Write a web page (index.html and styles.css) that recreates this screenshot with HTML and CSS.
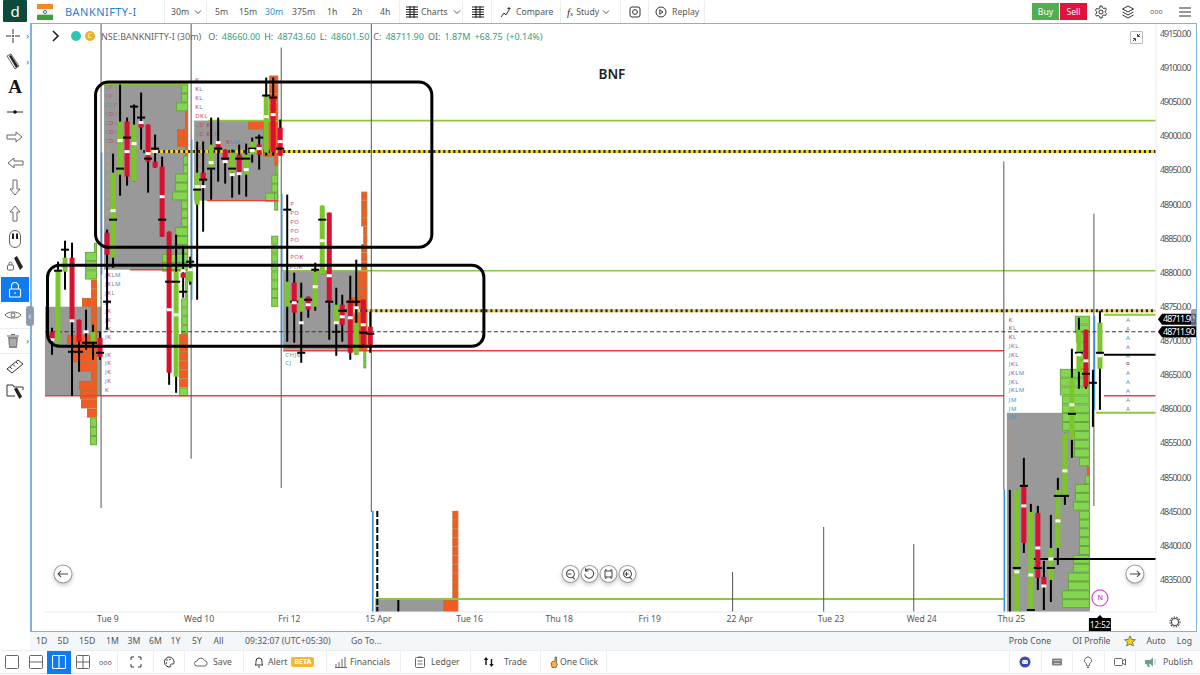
FILE: index.html
```html
<!DOCTYPE html>
<html lang="en">
<head>
<meta charset="utf-8">
<title>BANKNIFTY-I</title>
<link rel="stylesheet" href="styles.css">
</head>
<body>
<div class="app">
  <header class="topbar">
    <div class="logo">d</div>
    <svg class="flag" viewBox="0 0 16 16"><rect width="16" height="5.3" fill="#f08a24"/><rect y="5.3" width="16" height="5.4" fill="#f4f4f4"/><rect y="10.7" width="16" height="5.3" fill="#3f9e3f"/><circle cx="8" cy="8" r="1.6" fill="none" stroke="#2a4a9a" stroke-width=".8"/></svg>
    <div class="symbol">BANKNIFTY-I</div>
    <div class="cell c-int">30m<svg class="chev" viewBox="0 0 8 8"><path d="M1 2.5 4 5.5 7 2.5"/></svg></div>
    <div class="cell c-times">
      <span>5m</span><span>15m</span><span class="on">30m</span><span>375m</span><span>1h</span><span>2h</span><span>4h</span>
    </div>
    <div class="cell c-charts">
      <svg class="ic-14" viewBox="0 0 14 14"><path class="bars" d="M1 2h12M1 4.5h12M1 7h12M1 9.5h12M1 12h12M5 1v12M9 1v12"/></svg>Charts<svg class="chev" viewBox="0 0 8 8"><path d="M1 2.5 4 5.5 7 2.5"/></svg>
    </div>
    <div class="cell c-tpl"><svg class="ic-14" viewBox="0 0 14 14"><path class="bars" d="M1 2h12M1 4.5h12M1 7h12M1 9.5h12M1 12h12M5 1v12M9 1v12"/></svg></div>
    <div class="cell c-cmp"><svg class="ic-12" viewBox="0 0 12 12"><path class="ln" d="M1 11 4 7l2 2 3-5"/><path class="ln" d="M9 1v3M7.5 2.5h3"/></svg>Compare</div>
    <div class="cell c-study"><i class="fx">f<small>x</small></i>Study<svg class="chev" viewBox="0 0 8 8"><path d="M1 2.5 4 5.5 7 2.5"/></svg></div>
    <div class="cell c-cam"><svg class="ic-12" viewBox="0 0 12 12"><rect class="ln" x="1" y="1" width="10" height="10" rx="2"/><circle class="ln" cx="6" cy="6" r="2.4"/></svg></div>
    <div class="cell c-replay"><svg class="ic-12" viewBox="0 0 12 12"><circle class="ln" cx="6" cy="6" r="5"/><path class="ln" d="M4.8 3.8 8 6 4.8 8.200z"/></svg>Replay</div>
    <div class="spacer"></div>
    <button class="trade buy">Buy</button>
    <button class="trade sell">Sell</button>
    <svg class="ic-14 t-gear" viewBox="0 0 14 14"><circle class="ln" cx="7" cy="7" r="2"/><path class="ln" d="M6 1h2l.4 1.700 1.500.8 1.600-.6 1 1.800-1.200 1.200v1.600l1.200 1.200-1 1.800-1.600-.6-1.500.8L8 13H6l-.4-1.700-1.500-.8-1.600.6-1-1.800 1.200-1.200V6.500L1.500 5.300l1-1.800 1.600.6 1.500-.8z"/></svg>
    <svg class="ic-14 t-layers" viewBox="0 0 14 14"><path class="ln" d="M7 1 12.500 4 7 7 1.500 4zM1.500 7 7 10l5.500-3M1.500 10 7 13l5.500-3"/></svg>
    <span class="t-dots">ooo</span>
    <svg class="ic-14 t-menu" viewBox="0 0 14 14"><path class="ln" d="M1 3h12M1 7h12M1 11h12"/></svg>
  </header>

  <div class="middle">
    <nav class="tools">
      <div class="tool has-more"><svg viewBox="0 0 18 18"><path class="ln" d="M9 2v5M9 11v5M2 9h5M11 9h5"/><circle cx="9" cy="9" r="1" fill="#222"/></svg><b class="more">›</b></div>
      <div class="tool has-more"><svg viewBox="0 0 18 18"><path class="gr" d="M3 4 7 2l8 12-4 3z"/><path d="M5 4 7 3l7 11-2 2z" fill="#222"/></svg><b class="more">›</b></div>
      <div class="tool"><span class="glyph-a">A</span></div>
      <div class="tool"><svg viewBox="0 0 18 18"><path class="ln" d="M1 9h16"/><circle cx="9" cy="9" r="1.800" fill="#111"/></svg></div>
      <div class="tool"><svg viewBox="0 0 18 18"><path class="gr" d="M1 7h9V4l6 5-6 5v-3H1z"/></svg></div>
      <div class="tool"><svg viewBox="0 0 18 18"><path class="gr" d="M17 7H8V4L2 9l6 5v-3h9z"/></svg></div>
      <div class="tool"><svg viewBox="0 0 18 18"><path class="gr" d="M7 1v9H4l5 6 5-6h-3V1z"/></svg></div>
      <div class="tool"><svg viewBox="0 0 18 18"><path class="gr" d="M7 17V8H4l5-6 5 6h-3v9z"/></svg></div>
      <div class="tool"><svg viewBox="0 0 18 18"><path class="gr" d="M3.500 6a5.500 5.500 0 0 1 11 0v6a5.500 5.500 0 0 1-11 0z"/><path d="M6 3.500h2V9H6zM10 3.500h2V9h-2z" fill="#222"/></svg></div>
      <div class="tool"><svg viewBox="0 0 18 18"><path d="M8 3 11 1l6 11-3 3z" fill="#222"/><rect class="gr" x="1.500" y="10" width="6" height="5" rx="1"/><path class="gr" d="M3 10V8.500a1.500 1.500 0 0 1 3 0V10"/></svg></div>
      <div class="tool active"><svg viewBox="0 0 18 18"><rect class="wh" x="3.500" y="8" width="11" height="8" rx="1"/><path class="wh" d="M5.500 8V5a3.500 3.500 0 0 1 7 0v3M9 11v2"/></svg></div>
      <div class="tool has-more"><svg viewBox="0 0 18 18"><path class="gr" d="M1 9c3-4 13-4 16 0-3 4-13 4-16 0z"/><circle class="gr" cx="9" cy="9" r="2"/></svg><b class="more">›</b></div>
      <div class="tool rule has-more"><svg viewBox="0 0 18 18"><path d="M4 5h10l-1 11H5z" fill="#888"/><path class="gr" d="M3 4h12M7 2.500h4"/><path d="M7 7v7M9 7v7M11 7v7" stroke="#eee" stroke-width=".7"/></svg><b class="more">›</b></div>
      <div class="tool rule"><svg viewBox="0 0 18 18"><path class="ln" d="M1 12 12 3l5 4-11 9zM4 10l2 2M7 7.500l2 2M10 5l2 2"/></svg></div>
      <div class="tool"><svg viewBox="0 0 18 18"><path class="ln" d="M1 3h6l1 2h9v3M1 3v11h8"/><path d="M8 7l3-1.500 5 9-2.500 2.500z" fill="#222"/></svg></div>
    </nav>
    <div class="handle">‹</div>
    <main class="frame">
      <div id="chart" class="chart"></div>
      <div class="legend">
        <svg class="leg-open" viewBox="0 0 8 12"><path d="M1 1l5 5-5 5"/></svg>
        <i class="dot teal"></i><i class="dot gold">C</i>
        <span class="leg-name">NSE:BANKNIFTY-I (30m)</span>
        <span class="k">O:</span><span class="v">48660.00</span>
        <span class="k">H:</span><span class="v">48743.60</span>
        <span class="k">L:</span><span class="v">48601.50</span>
        <span class="k">C:</span><span class="v">48711.90</span>
        <span class="k">OI:</span><span class="v">1.87M</span><span class="v">+68.75</span><span class="v">(+0.14%)</span>
      </div>
      <div class="collapse"><svg viewBox="0 0 11 11"><path d="M6.500 4.500 9 2M6.500 2v2.500H9M4.500 6.500 2 9M2 6.500h2.500V9"/></svg></div>
      <div class="handle-r">›</div>
    </main>
  </div>

  <div class="ranges">
    <div class="rlist"><span>1D</span><span>5D</span><span>15D</span><span>1M</span><span>3M</span><span>6M</span><span>1Y</span><span>5Y</span><span>All</span></div>
    <span class="clock">09:32:07 (UTC+05:30)</span>
    <span class="goto">Go To...</span>
    <div class="spacer"></div>
    <span class="r-prob">Prob Cone</span>
    <span class="r-oi">OI Profile</span>
    <svg class="r-star" viewBox="0 0 12 12"><path d="M6 .8 7.600 4.300l3.800.4-2.900 2.500.9 3.800L6 9l-3.400 2 .9-3.800L.6 4.700l3.800-.4z"/></svg>
    <span class="r-auto">Auto</span>
    <span class="r-log">Log</span>
  </div>

  <footer class="bottombar">
    <div class="b-layouts">
      <svg class="lay" viewBox="0 0 16 16"><rect class="gr" x="1.500" y="1.500" width="13" height="13" rx="1"/></svg>
      <svg class="lay l2" viewBox="0 0 16 16"><rect class="gr" x="1.500" y="1.500" width="13" height="13" rx="1"/><path class="gr" d="M1.500 8h13"/></svg>
      <span class="lay-on"><svg viewBox="0 0 16 16"><rect class="wh" x="1.500" y="1.500" width="13" height="13" rx="1"/><path class="wh" d="M8 1.500v13"/></svg></span>
      <svg class="lay" viewBox="0 0 16 16"><rect class="gr" x="1.500" y="1.500" width="13" height="13" rx="1"/><path class="gr" d="M1.500 8h13M8 1.500v13"/></svg>
      <span class="b-dots">ooo</span>
    </div>
    <div class="b-cell b-full"><svg class="ic-12" viewBox="0 0 12 12"><path class="ln" d="M1 4V1h3M8 1h3v3M11 8v3H8M4 11H1V8"/></svg></div>
    <div class="b-cell b-pal"><svg class="ic-12" viewBox="0 0 12 12"><path class="ln" d="M6 1a5 5 0 1 0 1 10c1 0 .8-1.200.5-1.800-.3-.8.400-1.200 1.200-1.200H10c1 0 1-1 1-2a5 5 0 0 0-5-5z"/><circle cx="4" cy="4" r=".8" fill="#333"/><circle cx="7" cy="3.500" r=".8" fill="#333"/><circle cx="3.500" cy="7" r=".8" fill="#333"/></svg></div>
    <div class="b-cell b-save"><svg class="ic-12w" viewBox="0 0 14 10"><path class="gr" d="M3 9a2.500 2.500 0 0 1 0-5 4 4 0 0 1 7.500-.5A2.800 2.800 0 0 1 11 9z"/></svg>Save</div>
    <div class="b-cell b-alert"><svg class="ic-12" viewBox="0 0 12 12"><path class="ln" d="M2 9c1-1 1-2 1-4a3 3 0 0 1 6 0c0 2 0 3 1 4zM5 11h2"/></svg>Alert<em class="beta">BETA</em></div>
    <div class="b-cell b-fin"><svg class="ic-12" viewBox="0 0 12 12"><path class="gr" d="M1 11V8M4 11V6M7 11V3M10 11V1M0 11.500h12"/></svg>Financials</div>
    <div class="b-cell b-led"><svg class="ic-12" viewBox="0 0 12 12"><rect class="gr" x="1.500" y="1.500" width="9" height="10" rx="1"/><path class="gr" d="M4 1h4M3.500 5h5M3.500 8h5"/></svg>Ledger</div>
    <div class="b-cell b-trade"><svg class="ic-12" viewBox="0 0 12 12"><path d="M3 1 .8 4h1.500v5h1.400V4h1.500zM8.500 11 6.300 8h1.500V3h1.400v5h1.500z" fill="#111"/></svg>Trade</div>
    <div class="b-cell b-one"><svg class="ic-hand" viewBox="0 0 8 12"><path d="M5 1h1.500v6L7.500 8 6 11.500H2L1 7l1.500-1.500L5 5z" fill="#f2b33d" stroke="#333" stroke-width=".6"/></svg>One Click</div>
    <div class="spacer"></div>
    <div class="b-cell b-ic first"><svg class="ic-12" viewBox="0 0 12 12"><circle cx="6" cy="6" r="5.500" fill="#3c4aa8"/><rect x="3" y="4" width="6" height="4" rx="1.500" fill="#fff"/><circle cx="4.800" cy="6" r=".6" fill="#3c4aa8"/><circle cx="7.200" cy="6" r=".6" fill="#3c4aa8"/></svg></div>
    <div class="b-cell b-ic"><svg class="ic-12" viewBox="0 0 12 12"><rect x="1" y="2.500" width="10" height="7" rx="1" fill="#7b8288"/><path d="M2.500 4.500h7M3 7.500h6" stroke="#ddd" stroke-width=".7"/></svg></div>
    <div class="b-cell b-ic"><svg class="ic-12" viewBox="0 0 12 12"><path class="gr" d="M6 1a3.500 3.500 0 0 0-2 6.400L5 10h2l1-2.600A3.500 3.500 0 0 0 6 1zM5 11.500h2"/></svg></div>
    <div class="b-cell b-ic"><svg class="ic-12" viewBox="0 0 12 12"><rect class="gr" x=".5" y="2.500" width="8" height="7" rx="1"/><path class="gr" d="M8.500 5 11.500 3v6L8.500 7z"/></svg></div>
    <div class="b-cell b-pub"><svg class="ic-12" viewBox="0 0 12 12"><path d="M0 4h5l3-2.500v9L5 8H4l1 3H3L1.500 8H0z" fill="#6f9f8f"/><path d="M10 3v6" stroke="#bbb"/></svg>Publish</div>
  </footer>
</div>
<script src="chart.js"></script>
</body>
</html>
```
FILE: styles.css
```css
* { box-sizing: border-box; }
html, body { margin: 0; height: 100%; background: #fff; overflow: hidden; }
body { font-family: "Noto Sans", "Open Sans", sans-serif; font-size: 8.7px; color: #555; white-space: nowrap; }
svg { display: block; flex: none; }
.ln { fill: none; stroke: #333; stroke-width: 1; }
.gr { fill: none; stroke: #666; stroke-width: 1; }
.wh { fill: none; stroke: #fff; stroke-width: 1.1; }
.bars { fill: none; stroke: #222; stroke-width: 1.1; }
.ic-14 { width: 14px; height: 14px; }
.ic-12 { width: 12px; height: 12px; }
.ic-12w { width: 14px; height: 10px; }
.app { width: 1200px; height: 675px; display: flex; flex-direction: column; }
.spacer { flex: 1; }

/* top bar */
.topbar { height: 23px; display: flex; align-items: center; background: #fff; flex: none; }
.logo { width: 24px; height: 22px; margin-left: 3px; background: #0c4a3c; color: #fff; font-size: 15px; line-height: 22px; text-align: center; align-self: flex-start; border-radius: 1px; }
.flag { width: 16px; height: 16px; margin-left: 10px; }
.symbol { width: 99px; margin-left: 12px; color: #1f7fd0; font-size: 11px; letter-spacing: .45px; }
.cell { height: 22px; display: flex; align-items: center; border-left: 1px solid #eceff2; flex: none; }
.c-int { width: 42px; padding-left: 6px; gap: 5px; }
.chev { width: 8px; height: 8px; }
.chev path { fill: none; stroke: #555; stroke-width: 1; }
.c-times { width: 193px; padding-left: 8px; }
.c-times span { flex: none; }
.c-times span:nth-child(1) { width: 24px; }
.c-times span:nth-child(2) { width: 26px; }
.c-times span:nth-child(3) { width: 27px; }
.c-times span:nth-child(4) { width: 35px; }
.c-times span:nth-child(5) { width: 25px; }
.c-times span:nth-child(6) { width: 28px; }
.c-times .on { color: #2f8fe0; }
.c-charts { width: 63px; padding-left: 5px; gap: 2px; }
.c-charts .chev { margin-left: 3px; }
.c-tpl { width: 29px; padding-left: 8px; }
.c-cmp { width: 69px; padding-left: 8px; gap: 4px; }
.c-study { width: 60px; padding-left: 6px; gap: 3px; }
.fx { font-family: "Liberation Serif", serif; font-size: 11px; color: #333; }
.fx small { font-size: 7px; }
.c-cam { width: 28px; padding-left: 8px; }
.c-replay { width: 57px; padding-left: 6px; gap: 5px; border-right: 1px solid #eceff2; }
.trade { width: 27px; height: 17px; border: 0; padding: 0; font: inherit; color: #fff; }
.buy { background: #4fae50; }
.sell { margin-left: 1px; margin-right: 7px; background: #e2123f; }
.t-gear { margin-right: 13px; }
.t-layers { margin-right: 15px; }
.t-dots { width: 14px; font-size: 7px; color: #666; margin-right: 14px; }
.t-menu { margin-right: 8px; }

/* middle */
.middle { flex: 1; display: flex; min-height: 0; position: relative; }
.tools { width: 30px; flex: none; display: flex; flex-direction: column; }
.tool { height: 25.4px; flex: none; display: flex; align-items: center; justify-content: center; position: relative; color: #444; }
.tool svg { width: 18px; height: 18px; }
.has-more svg { margin-right: 4px; }
.tool.active { background: #0d7bf2; margin: 0 1px; }
.tool.rule { border-top: 1px solid #eee; }
.more { position: absolute; right: 1px; font-weight: 400; font-size: 9px; color: #555; }
.glyph-a { font-family: "Liberation Serif", serif; font-size: 19px; font-weight: 700; color: #111; line-height: 1; }
.handle { position: absolute; left: 26px; top: 283px; width: 8px; height: 20px; background: #8c9cb0; color: #fff; border-radius: 3px; font-size: 9px; line-height: 19px; text-align: center; z-index: 2; }
.frame { flex: 1; margin-right: 3px; border: 1.5px solid #7fb2df; border-left-width: 2px; position: relative; min-width: 0; }
.chart { width: 100%; height: 100%; }
.chart svg { width: 100%; height: 100%; }
.legend { position: absolute; left: 0; top: 4px; height: 16px; display: flex; align-items: center; font-size: 9px; pointer-events: none; }
.leg-open { width: 8px; height: 12px; margin-left: 20px; }
.leg-open path { fill: none; stroke: #222; stroke-width: 1.6; }
.dot { width: 10px; height: 10px; border-radius: 50%; flex: none; font-style: normal; font-size: 7px; line-height: 10px; text-align: center; color: #fff; }
.teal { margin-left: 11px; background: #2cc7b4; }
.gold { margin-left: 4px; background: #eeb023; }
.leg-name { margin-left: 6px; margin-right: 7px; color: #666; }
.k { margin-right: 4px; color: #666; }
.v { margin-right: 4px; color: #2f9f84; }
.collapse { position: absolute; right: 53px; top: 7px; width: 13px; height: 13px; border: 1px solid #bbb; border-radius: 1px; background: #fff; }
.collapse svg { width: 11px; height: 11px; }
.collapse path { fill: none; stroke: #333; stroke-width: .9; }
.handle-r { position: absolute; right: 0; top: 285px; width: 5px; height: 17px; background: rgba(120, 135, 155, .75); color: #fff; border-radius: 2px 0 0 2px; font-size: 7px; line-height: 16px; text-align: center; }

/* chart */
.p-t { font-size: 9px; letter-spacing: -1px; fill: #555; }
.t-t { font-size: 8.6px; fill: #555; }
.tpo { font-size: 6px; letter-spacing: .5px; }
.bnf { font-size: 13.5px; font-weight: 600; fill: #222; }
.tag-t { font-size: 9px; letter-spacing: -.9px; fill: #fff; }
.clk-t { font-size: 8px; fill: #fff; }
.n-t { font-size: 7px; fill: #e040e0; font-weight: 600; }
.nav-btn { fill: #fff; stroke: #999; stroke-width: 1; filter: drop-shadow(0 2px 2px rgba(0,0,0,.2)); }

/* range bar */
.ranges { height: 18px; flex: none; margin-left: 30px; display: flex; align-items: center; background: #f4f7fa; }
.rlist { display: flex; margin-left: 6px; width: 215px; flex: none; }
.rlist span { width: 21.500px; flex: none; }
.rlist span:nth-child(3) { width: 27px; }
.clock { margin-left: -6px; width: 106px; flex: none; }
.r-prob { margin-right: 21px; }
.r-oi { margin-right: 13px; }
.r-star { width: 12px; height: 12px; margin-right: 11px; }
.r-star path { fill: #f2d020; stroke: #555; stroke-width: .7; }
.r-auto { margin-right: 11px; }
.r-log { margin-right: 8px; }

/* bottom bar */
.bottombar { height: 24px; flex: none; margin-bottom: 1px; display: flex; align-items: center; background: #fff; border-top: 1px solid #eceff2; border-bottom: 1px solid #e4e6e8; color: #555; }
.b-layouts { width: 117px; flex: none; display: flex; align-items: center; padding-left: 4px; }
.lay { width: 16px; height: 16px; margin-right: 4px; }
.l2 { margin-left: 4px; margin-right: 3px; }
.lay-on { width: 24px; height: 23px; background: #0d7bf2; display: flex; align-items: center; justify-content: center; margin-right: 4px; }
.lay-on svg { width: 16px; height: 16px; }
.b-dots { font-size: 7px; margin-left: 4px; color: #555; }
.b-cell { height: 23px; flex: none; display: flex; align-items: center; border-left: 1px solid #eceff2; }
.b-full { width: 36px; justify-content: center; }
.b-pal { width: 31px; justify-content: center; }
.b-save { width: 59px; padding-left: 9px; gap: 5px; }
.b-alert { width: 83px; padding-left: 9px; gap: 3px; }
.beta { width: 23px; height: 10px; margin-left: 1px; background: #f5b638; border-radius: 2px; color: #fff; font-style: normal; font-size: 7px; font-weight: 700; line-height: 10px; text-align: center; }
.b-fin { width: 74px; padding-left: 8px; gap: 3px; }
.b-led { width: 70px; padding-left: 13px; gap: 5px; }
.b-trade { width: 70px; padding-left: 12px; gap: 9px; }
.b-one { width: 67px; padding-left: 9px; gap: 2px; border-right: 1px solid #eceff2; }
.ic-hand { width: 8px; height: 12px; }
.b-ic { width: 31.500px; justify-content: center; }
.b-pub { width: 65px; padding-left: 9px; gap: 6px; }
```
FILE: chart.js
```js
(function () {
  var NS = 'http://www.w3.org/2000/svg';
  var svg = document.createElementNS(NS, 'svg');
  svg.setAttribute('viewBox', '32 24.5 1163 606.500');
  svg.setAttribute('preserveAspectRatio', 'none');

  function el(name, attrs, text) {
    var n = document.createElementNS(NS, name);
    for (var k in attrs) n.setAttribute(k, attrs[k]);
    if (text !== undefined) n.textContent = text;
    svg.appendChild(n);
    return n;
  }
  function rect(x, y, w, h, fill, extra) {
    var a = { x: x, y: y, width: w, height: h, fill: fill };
    if (extra) for (var k in extra) a[k] = extra[k];
    return el('rect', a);
  }
  function line(x1, y1, x2, y2, stroke, w, dash) {
    var a = { x1: x1, y1: y1, x2: x2, y2: y2, stroke: stroke, 'stroke-width': w };
    if (dash) a['stroke-dasharray'] = dash;
    return el('line', a);
  }

  var AXIS = 1155, GREEN = '#8fc641', RED = '#e8413a', GRID = '#555', BLUE = '#3d8fd6';

  /* value-area boxes */
  [[104, 85, 84, 185], [194, 121, 84, 80], [283, 271, 84, 79], [45, 307, 56, 89], [1006, 413, 83, 199], [375, 599, 80, 13]]
    .forEach(function (b) { rect(b[0], b[1], b[2], b[3], '#999'); });

  /* volume profiles: right edge, first row, row height, widths (negative = orange) */
  function profile(right, top, step, rows) {
    rows.forEach(function (w, i) {
      if (!w) return;
      var o = w < 0, a = Math.abs(w);
      rect(right - a + .5, top + i * step + .5, a - 1, step - 1, o ? '#f25a26' : '#84d550', {
        stroke: o ? '#c0702c' : '#68a83e', 'stroke-width': 1
      });
    });
  }
  profile(188, 85, 8.9, [7, 7, 12, -3, -3, -11, -11, -3, 5, 5, 13, 13, 16, 7, 7, 7, 13, 13, 7, 26, 26]);
  profile(188, 272, 8.9, [3, 3, 3, 7, 7, 7, 7, -9, -9, -9, -9, -9, -9, 9]);
  profile(278, 76, 9, [-9, -9, -9, -9, -9, -30, -15, -15, -15, -4, 3, 7, 7, 13]);
  profile(278, 193, 9, [4, 4]);
  profile(278, 236, 8.9, [7, 7, 7, 7, 7, 7, 7, 7]);
  profile(367, 192, 8.7, [-6, -6, -6, -6, -4, -4, -6, -6, -6]);
  profile(367, 271, 8.8, [-9, -9, -9, -18, -9, -14, -14, -12, -8]);
  profile(366, 351, 8.8, [3, 3]);
  profile(97, 243, 9.2, [3, 12, 12, 12, -6, -6, -15, -6, -6, -6, -30, -25, -25, -18, -6, -18, -17, -16, -10, 7, 7, 7]);
  profile(1089, 316, 8.85, [15, 15, 14, 12, 12, 10, 30, 30, 30, 28, 28, 28, 28, 16, 16, 16, 11, -3, 5, 15, 15, 17, 11, 11, 11, 11, 11, 17, 17, 22, 22, 28, 28]);
  profile(458, 511, 8.9, [-6, -6, -6, -6, -6, -6, -6, -6, -6, -6]);
  profile(458, 600, 12, [-15]);

  /* TPO letters */
  var LC = { C: '#5d9f7a', D: '#d0405a', K: '#d01f55', L: '#777', M: '#4d8fc0', J: '#2aa7a0', P: '#c9508a', O: '#c9508a', F: '#c9508a', H: '#5d9f7a', E: '#d01f55', A: '#4d8fc0', X: '#d01f55' };
  function tpo(x, y, s, color) {
    var t = el('text', { x: x, y: y, class: 'tpo' });
    s.split('').forEach(function (ch) {
      var sp = document.createElementNS(NS, 'tspan');
      sp.setAttribute('fill', color || LC[ch] || '#666');
      sp.textContent = ch;
      t.appendChild(sp);
    });
  }
  [[89, 'CP'], [98, 'CP'], [107, 'CCP'], [116, 'CDCP'], [125, 'CDC'], [134, 'CDC'], [143, 'CDC']].forEach(function (r) { tpo(105, r[0], r[1]); });
  for (var o = 152; o < 230; o += 9) tpo(106, o, 'C', '#e0a060');
  [[82, 'K'], [91, 'KL'], [100, 'KL'], [109, 'KL'], [118, 'DKL'], [127, 'CD  K'], [136, 'CD  KLM']].forEach(function (r) { tpo(195, r[0], r[1]); });
  tpo(226, 144, 'KLM');
  for (var o2 = 145; o2 < 200; o2 += 9) tpo(196, o2, 'D', '#e0a060');
  [[277, 'JKLM'], [286, 'JKLM'], [295, 'JKL'], [304, 'JK'], [313, 'JK'], [322, 'JK'], [331, 'JK'], [339, 'JK'], [357, 'JK'], [365, 'JK'], [374, 'JK'], [383, 'JK'], [392, 'K']].forEach(function (r) { tpo(105, r[0], r[1]); });
  [[206, 'P'], [215, 'PO'], [224, 'PO'], [233, 'PO'], [242, 'PO'], [259, 'POK'], [269, 'CPOK'], [357, 'CHJM'], [365, 'CJ']].forEach(function (r) { tpo(285 + (r[1].charAt(0) === 'P' ? 5 : 0), r[0], r[1]); });
  [[322, 'K'], [330, 'KL'], [339, 'KL'], [348, 'JKL'], [357, 'JKL'], [366, 'JKL'], [375, 'JKLM'], [384, 'JKL'], [392, 'JKLM'], [402, 'JM'], [411, 'JM'], [419, 'JM']].forEach(function (r) { tpo(1008, r[0], r[1]); });
  [320, 329, 338, 347, 356, 373, 382, 391, 400, 409].forEach(function (y) { tpo(1125, y + 2, 'A'); });
  el('text', { x: 1125, y: 365, class: 'tpo', fill: '#333' }, 'o');
  for (var o3 = 430; o3 < 612; o3 += 9) tpo(1008, o3, 'C', '#c09060');

  /* horizontal levels */
  line(104, 84.5, 188, 84.5, GREEN, 2);
  line(208, 121, AXIS, 121, GREEN, 1.6);
  line(282, 271, AXIS, 271, GREEN, 1.6);
  line(375, 599, 1003, 599, GREEN, 2);
  line(1095, 413, AXIS, 413, GREEN, 2);
  line(1103, 315, AXIS, 315, GREEN, 2);
  line(130, 270, 190, 270, RED, 1.4);
  line(207, 201, 278, 201, RED, 1.4);
  line(283, 351, 1003, 351, RED, 1.4);
  line(45, 396, 1003, 396, RED, 1.4);
  line(1103, 396, AXIS, 396, RED, 1.6);
  line(1103, 355, AXIS, 355, '#000', 2);
  line(1033, 559, AXIS, 559, '#000', 2);
  line(143, 152, AXIS, 152, '#f2d23a', 3);
  line(143, 152, AXIS, 152, '#222', 3, '2 3');
  line(345, 311, AXIS, 311, '#f2d23a', 3);
  line(345, 311, AXIS, 311, '#222', 3, '2 3');

  /* long verticals */
  [[101, 24, 508], [191, 24, 459], [281, 48, 488], [371, 24, 512], [1003, 162, 490], [1093, 214, 506], [732, 572, 612], [823, 527, 612], [913, 544, 612]]
    .forEach(function (v) { line(v[0], v[1], v[0], v[2], GRID, 1); });
  [[101.5, 153, 275], [191.5, 140, 300], [281.5, 194, 345], [372.5, 511, 612], [1003.5, 490, 612], [1093.5, 316, 410]]
    .forEach(function (v) { line(v[0], v[1], v[0], v[2], BLUE, 1.6); });
  line(377, 511, 377, 612, '#000', 2, '6 2');
  rect(397, 600, 2, 12, '#000');

  line(45, 332, AXIS, 332, '#333', 1, '4 2.500');

  /* candles: x, wickTop, wickBottom, bodyTop, bodyBottom, colour, whiteMark, tick */
  var G = '#7cc62c', R = '#d9102f';
  [
    [107, 230, 330, 233, 255, R, 0, 302], [113, 154, 268, 173, 258, G, 211, 220], [120, 85, 196, 122, 175, G, 141, 169],
    [127, 118, 186, 122, 177, R, 152, 138], [134, 105, 182, 125, 182, G, 144, 107], [141, 93, 150, 122, 128, R, 123, 118],
    [148, 125, 193, 125, 162, R, 154, 159], [155, 135, 168, 162, 168, R, 152, 149], [162, 157, 237, 167, 237, R, 197, 220],
    [169, 232, 385, 232, 373, R, 310, 282], [176, 235, 393, 272, 377, G, 315, 282], [183, 247, 298, 273, 278, R, 271, 292],
    [190, 257, 285, 270, 282, G, 270, 262], [197, 142, 300, 173, 205, G, 187, 190], [203, 142, 232, 173, 180, R, 187, 180],
    [211, 118, 200, 145, 170, G, 163, 169], [218, 118, 182, 142, 150, R, 143, 149], [225, 150, 184, 150, 162, R, 162, 159],
    [232, 150, 198, 153, 173, G, 175, 169], [239, 145, 195, 155, 175, R, 174, 159], [246, 144, 197, 155, 175, G, 170, 159],
    [252, 138, 163, 142, 155, G, 151, 149], [259, 135, 170, 145, 155, R, 149, 138], [266, 78, 156, 97, 153, G, 117, 96],
    [273, 78, 156, 97, 153, R, 115, 98], [280, 120, 156, 128, 156, R, 142, 149],
    [287, 195, 342, 282, 307, G, 0, 210], [294, 273, 343, 283, 313, R, 303, 302], [301, 283, 363, 298, 312, G, 323, 353],
    [308, 297, 318, 297, 310, R, 305, 300], [315, 263, 311, 272, 307, G, 287, 270], [322, 206, 275, 206, 275, G, 241, 220],
    [329, 213, 340, 213, 302, R, 276, 302], [336, 288, 356, 305, 322, G, 323, 332], [342, 295, 342, 305, 325, R, 317, 311],
    [350, 276, 360, 300, 353, R, 318, 302], [356, 260, 355, 323, 355, G, 308, 302], [363, 300, 345, 300, 345, R, 325, 333],
    [370, 312, 353, 327, 345, R, 0, 334],
    [52, 328, 355, 332, 340, R, 340, 0], [58, 262, 345, 270, 345, G, 0, 271], [65, 241, 290, 258, 272, G, 0, 250],
    [72, 243, 396, 258, 322, R, 321, 352], [79, 320, 372, 320, 342, R, 0, 352], [86, 310, 350, 0, 0, G, 332, 343],
    [93, 325, 360, 332, 342, G, 0, 343], [100, 332, 360, 338, 357, R, 0, 353],
    [1009, 490, 612, 0, 0, G, 0, 0], [1016, 490, 612, 490, 612, G, 572, 568], [1023, 458, 553, 485, 543, R, 506, 486],
    [1030, 504, 612, 512, 612, G, 575, 610], [1037, 506, 590, 513, 578, R, 548, 568], [1043, 561, 610, 577, 587, R, 586, 0],
    [1050, 515, 602, 548, 580, G, 559, 568], [1057, 478, 565, 490, 548, G, 521, 496], [1064, 433, 505, 433, 496, G, 471, 496],
    [1071, 349, 458, 378, 440, G, 405, 414], [1078, 318, 389, 330, 372, G, 355, 353], [1085, 330, 389, 330, 387, R, 361, 374],
    [1092, 370, 427, 0, 0, G, 0, 383], [1099, 311, 410, 323, 369, G, 356, 353]
  ].forEach(function (c) {
    rect(c[0] - 1, c[1], 2, c[2] - c[1], '#000');
    if (c[4] > c[3]) rect(c[0] - 2.5, c[3], 5, c[4] - c[3], c[5]);
    if (c[7]) rect(c[0] - 4, c[7] - 1, 8, 2, '#000');
    if (c[6]) rect(c[0] - 2.5, c[6] - 1.5, 5, 3, '#fff');
  });

  /* hand-drawn boxes */
  el('rect', { x: 95.5, y: 82.5, width: 336, height: 165, rx: 13, fill: 'none', stroke: '#000', 'stroke-width': 3 });
  el('rect', { x: 47.5, y: 265.5, width: 436, height: 81, rx: 12, fill: 'none', stroke: '#000', 'stroke-width': 3 });
  el('text', { x: 598, y: 79, class: 'bnf' }, 'BNF');

  /* axes */
  rect(AXIS, 24, 41, 590, '#fff');
  rect(32, 612, 1163, 20, '#fff');
  line(45, 612, AXIS, 612, '#e8ecf0', 1);
  line(AXIS, 24, AXIS, 612, '#e8ecf0', 1);
  [49150, 49100, 49050, 49000, 48950, 48900, 48850, 48800, 48750, 48700, 48650, 48600, 48550, 48500, 48450, 48400, 48350]
    .forEach(function (p, i) { el('text', { x: 1159, y: 37.5 + i * 34.09, class: 'p-t' }, p.toFixed(2)); });
  [['Tue 9', 97], ['Wed 10', 184], ['Fri 12', 278], ['15 Apr', 365], ['Tue 16', 456], ['Thu 18', 545], ['Fri 19', 638], ['22 Apr', 726], ['Tue 23', 817], ['Wed 24', 906], ['Thu 25', 997]]
    .forEach(function (t) { el('text', { x: t[1], y: 622, class: 't-t' }, t[0]); });

  /* price tags */
  [319.5, 332].forEach(function (y) {
    el('path', { d: 'M1157 ' + y + 'l4-5.500h34v11h-34z', fill: '#000' });
    el('text', { x: 1162, y: y + 3.2, class: 'tag-t' }, '48711.90');
  });

  /* time tag, session badge */
  el('path', { d: 'M1088 618h8l3-3 3 3h8v14h-22z', fill: '#000' });
  el('text', { x: 1089, y: 628, class: 'clk-t' }, '12:52');
  el('circle', { cx: 1099, cy: 598, r: 8, fill: '#fff', stroke: '#e040e0', 'stroke-width': 1.2 });
  el('text', { x: 1096.500, y: 600.500, class: 'n-t' }, 'N');

  /* gear in axis corner */
  el('circle', { cx: 1174, cy: 622, r: 3.500, fill: 'none', stroke: '#444', 'stroke-width': 1 });
  el('circle', { cx: 1174, cy: 622, r: 5, fill: 'none', stroke: '#444', 'stroke-width': 1, 'stroke-dasharray': '1.500 1.200' });

  /* navigation */
  function nav(x, d) {
    el('circle', { cx: x, cy: 574, r: 9, class: 'nav-btn' });
    el('path', { d: d, fill: 'none', stroke: '#444', 'stroke-width': 1 });
  }
  nav(63, 'M68 574h-10M61 571l-3 3 3 3');
  nav(1134, 'M1129 574h10M1136 571l3 3-3 3');
  function zoomBtn(x, inner) {
    el('circle', { cx: x, cy: 574, r: 8.500, class: 'nav-btn' });
    el('path', { d: inner, fill: 'none', stroke: '#444', 'stroke-width': 1 });
  }
  function lens(x) { return 'M' + (x + 5) + ' 574a4 4 0 1 1-1-2.800zM' + (x + 2.800) + ' 577l2.500 2.500'; }
  zoomBtn(570, lens(569) + 'M567 574h4');
  zoomBtn(589, 'M585 571a4.500 4.500 0 1 1-.8 3.500M585 568v3h3');
  zoomBtn(608, 'M604.500 571h7v6h-7zM606 571l-1-2M610 571l1-2M606 577l-1 2M610 577l1 2');
  zoomBtn(627, lens(626) + 'M624 574h4M626 572v4');

  document.getElementById('chart').appendChild(svg);
})();
```
